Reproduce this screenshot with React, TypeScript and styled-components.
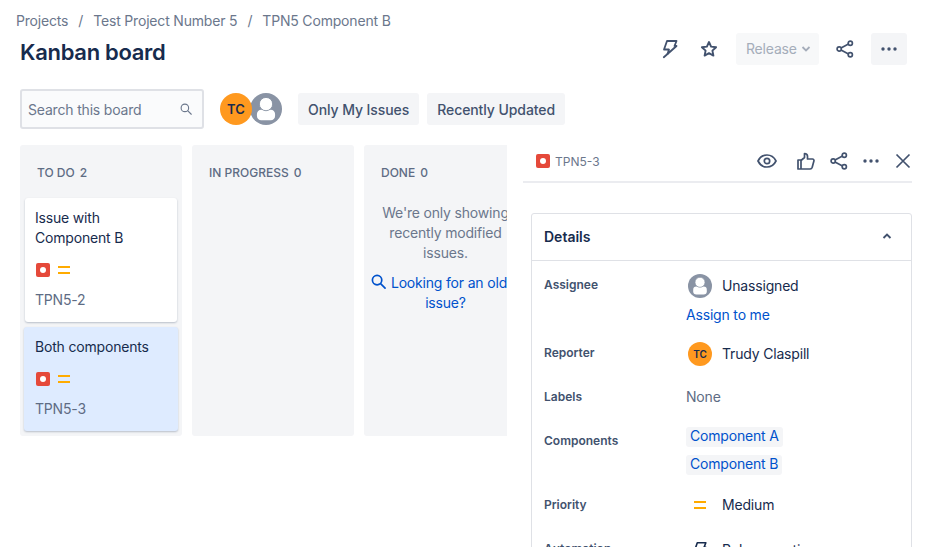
import styled, { createGlobalStyle } from "styled-components"
import { ReactNode } from "react"

const GlobalStyle = createGlobalStyle`
  html, body {
    margin: 0;
    padding: 0;
    height: 100%;
    background: #fff;
    overflow: hidden;
  }
  body {
    font-family: Inter, "Liberation Sans", sans-serif;
    letter-spacing: -0.18px;
    color: #172b4d;
  }
  * {
    box-sizing: border-box;
  }
`

const Page = styled.div`
  width: 931px;
  height: 547px;
  overflow: hidden;
`
const Breadcrumbs = styled.nav`
  display: flex;
  height: 20px;
  padding: 11px 0 0 16px;
  font-size: 14px;
  line-height: 20px;
  color: #6b778c;
  box-sizing: content-box;
`
const Crumb = styled.span``
const Slash = styled.span`
  margin: 0 10px;
`
const TitleRow = styled.div`
  display: flex;
  justify-content: space-between;
  align-items: flex-start;
  height: 58px;
  padding: 2px 24px 0 20px;
`
const Title = styled.h1`
  margin: 0;
  padding-top: 3px;
  font-size: 22px;
  line-height: 32px;
  font-weight: 600;
  letter-spacing: -0.3px;
  color: #172b4d;
`
const Actions = styled.div`
  display: flex;
  align-items: center;
`
const IconSlot = styled.span<{ $width: number; $gap?: number; $lead?: number }>`
  display: flex;
  align-items: center;
  justify-content: center;
  width: ${props => props.$width}px;
  height: 32px;
  margin-left: ${props => props.$lead ?? 0}px;
  margin-right: ${props => props.$gap ?? 0}px;
  color: #42526e;
`
const ReleaseButton = styled.button`
  display: flex;
  align-items: center;
  gap: 4px;
  width: 83px;
  height: 32px;
  padding: 0 0 0 10px;
  border: 0;
  border-radius: 3px;
  background: #f7f8f9;
  color: #a5adba;
  font-family: inherit;
  font-size: 14px;
  line-height: 18px;
  letter-spacing: -0.18px;
`
const MoreButton = styled.button`
  display: flex;
  align-items: center;
  justify-content: center;
  width: 36px;
  height: 32px;
  border: 0;
  border-radius: 3px;
  background: #f4f5f7;
  color: #42526e;
  padding: 0;
`
const Toolbar = styled.div`
  display: flex;
  align-items: center;
  height: 40px;
  margin-left: 20px;
`
const Search = styled.div`
  display: flex;
  align-items: center;
  justify-content: space-between;
  width: 184px;
  height: 40px;
  padding: 0 10px 0 6px;
  border: 2px solid #dfe1e6;
  border-radius: 3px;
  background: #fafbfc;
  color: #6b778c;
  font-size: 14px;
`
const Avatars = styled.div`
  display: flex;
  margin: 0 16px 0 16px;
`
const Avatar = styled.span<{ $size: number }>`
  position: relative;
  z-index: 1;
  display: flex;
  align-items: center;
  justify-content: center;
  flex: none;
  width: ${props => props.$size}px;
  height: ${props => props.$size}px;
  border-radius: 50%;
  background: #ff991f;
  color: #172b4d;
  font-size: ${props => (props.$size > 28 ? 13 : 10)}px;
  font-weight: 600;
  letter-spacing: 0;
`
const OverlapAvatar = styled.span`
  display: flex;
  margin-left: -2px;
`
const FilterButton = styled.button`
  height: 32px;
  margin-right: 8px;
  padding: 0 10px;
  border: 0;
  border-radius: 3px;
  background: #f4f5f7;
  color: #42526e;
  font-family: inherit;
  font-size: 14px;
  font-weight: 500;
  letter-spacing: -0.08px;
`
const Body = styled.div`
  display: flex;
  margin: 16px 0 0 20px;
`
const Board = styled.div`
  display: flex;
  flex: none;
  align-items: flex-start;
  gap: 10px;
  width: 487px;
  overflow: hidden;
`
const Column = styled.section`
  flex: none;
  width: 162px;
  height: 291px;
  padding: 0 4px;
  border-radius: 3px;
  background: #f4f5f7;
`
const ColumnHeader = styled.h2`
  display: flex;
  gap: 5px;
  height: 53px;
  margin: 0;
  padding: 20px 0 0 13px;
  font-size: 12px;
  line-height: 16px;
  font-weight: 500;
  letter-spacing: 0;
  color: #5e6c84;
`
const Card = styled.article<{ $selected?: boolean; $height: number }>`
  width: ${props => (props.$selected ? 154 : 152)}px;
  height: ${props => props.$height}px;
  margin: 0 ${props => (props.$selected ? 0 : 1)}px 5px;
  padding: 10px ${props => (props.$selected ? 11 : 10)}px;
  border-radius: 3px;
  background: ${props => (props.$selected ? "#deebff" : "#fff")};
  box-shadow: 0 1px 2px rgba(9, 30, 66, 0.25);
  font-size: 14px;
  line-height: 20px;
  color: #172b4d;
`
const CardIcons = styled.div`
  display: flex;
  align-items: center;
  gap: 8px;
  height: 14px;
  margin: 15px 0 0 1px;
`
const CardKey = styled.div`
  margin-top: 13px;
  color: #5e6c84;
`
const BugIcon = styled.span`
  display: flex;
  align-items: center;
  justify-content: center;
  flex: none;
  width: 14px;
  height: 14px;
  border-radius: 2px;
  background: #e5493a;

  &::after {
    content: "";
    width: 6px;
    height: 6px;
    border-radius: 50%;
    background: #fff;
  }
`
const EmptyNote = styled.div`
  margin-top: 5px;
  width: 155px;
  text-align: center;
  font-size: 14px;
  line-height: 20px;
  color: #6b778c;
`
const OldIssue = styled.div`
  margin-top: 10px;
  width: 155px;
  text-align: center;
  font-size: 14px;
  line-height: 20px;
  color: #0052cc;

  svg {
    vertical-align: -1px;
    margin-right: 5px;
  }
`
const Panel = styled.aside`
  flex: none;
  width: 389px;
  margin: -4px 0 0 16px;
`
const PanelHeader = styled.header`
  display: flex;
  align-items: center;
  justify-content: space-between;
  height: 40px;
  padding: 0 0 0 13px;
  border-bottom: 2px solid #ebecf0;
  box-sizing: content-box;
`
const IssueKey = styled.div`
  display: flex;
  align-items: center;
  gap: 5px;
  font-size: 12px;
  letter-spacing: 0;
  color: #6b778c;
`
const PanelIcons = styled.div`
  display: flex;
  align-items: center;
  color: #42526e;
`
const Details = styled.div`
  width: 381px;
  height: 400px;
  margin: 30px 0 0 8px;
  border: 1px solid #dfe1e6;
  border-radius: 3px;
`
const DetailsHeader = styled.div`
  display: flex;
  align-items: center;
  justify-content: space-between;
  height: 47px;
  padding: 0 19px 2px 12px;
  border-bottom: 1px solid #dfe1e6;
  font-size: 14px;
  font-weight: 600;
  letter-spacing: 0;
  color: #172b4d;
`
const Rows = styled.div`
  padding: 16px 0 0 12px;
`
const Row = styled.div<{ $height: number }>`
  display: grid;
  grid-template-columns: 142px 1fr;
  align-items: start;
  height: ${props => props.$height}px;
  font-size: 14px;
  line-height: 20px;
  color: #172b4d;
`
const RowLabel = styled.div`
  font-size: 12px;
  font-weight: 600;
  line-height: 16px;
  letter-spacing: 0;
  color: #42526e;
`
const ValueLine = styled.div`
  display: flex;
  align-items: center;
  gap: 10px;
  height: 24px;
  margin-top: -3px;
  padding-left: 2px;
`
const PriorityLine = styled(ValueLine)`
  height: 22px;
`
const AssignLink = styled.div`
  margin-top: 7px;
  color: #0052cc;
`
const NoneText = styled.div`
  margin-top: -2px;
  color: #5e6c84;
`
const TagList = styled.div`
  display: flex;
  flex-direction: column;
  align-items: flex-start;
  gap: 8px;
  margin-top: -6px;
`
const ComponentTag = styled.div`
  height: 20px;
  padding: 0 4px;
  border-radius: 3px;
  background: #f4f5f7;
  color: #0052cc;
  font-size: 14px;
  line-height: 18px;
`
const PriorityIcon = styled.span`
  display: flex;
  flex: none;
  justify-content: center;
  width: 24px;
`

const UserIcon = ({ size }: { size: number }) => (
  <svg width={size} height={size} viewBox="0 0 24 24">
    <circle cx="12" cy="12" r="12" fill="#8993a4" />
    <rect x="5.200" y="12.500" width="13.600" height="8" rx="3.200" fill="#fff" />
    <circle cx="12" cy="8.300" r="5" fill="#fff" stroke="#8993a4" strokeWidth="0.700" />
  </svg>
)

const Bolt = ({ size = 20 }: { size?: number }) => (
  <svg width={size} height={size} viewBox="0 0 20 20" fill="none" stroke="currentColor" strokeWidth="1.800" strokeLinejoin="round" strokeLinecap="round">
    <path d="M7 2h9.500L14.500 7h2L7.500 15 9 10.500H4z" />
    <path d="M3.800 18.200L7.500 15" />
  </svg>
)

const Star = () => (
  <svg width="18" height="18" viewBox="0 0 18 18" fill="none" stroke="currentColor" strokeWidth="1.900" strokeLinejoin="round">
    <path d="M9 2l2.100 4.600 5 .6-3.700 3.400 1 5L9 13.100l-4.400 2.500 1-5L1.900 7.200l5-.6z" />
  </svg>
)

const Share = () => (
  <svg width="20" height="20" viewBox="0 0 20 20" fill="none" stroke="currentColor" strokeWidth="1.700">
    <circle cx="15.300" cy="4.200" r="2.100" />
    <circle cx="15.300" cy="15.800" r="2.100" />
    <circle cx="4.200" cy="10" r="2.100" />
    <path d="M6 9l7.500-3.900M6 11l7.500 3.900" />
  </svg>
)

const Dots = () => (
  <svg width="18" height="6" viewBox="0 0 18 6" fill="currentColor">
    <circle cx="3" cy="3" r="1.700" />
    <circle cx="9" cy="3" r="1.700" />
    <circle cx="15" cy="3" r="1.700" />
  </svg>
)

const Medium = () => (
  <svg width="12" height="8" viewBox="0 0 12 8" fill="#ffab00">
    <rect x="0" y="0" width="12" height="2" />
    <rect x="0" y="6" width="12" height="2" />
  </svg>
)

const Glass = ({ size, color, width }: { size: number; color: string; width: number }) => (
  <svg width={size} height={size} viewBox="0 0 16 16" fill="none" stroke={color} strokeWidth={width} strokeLinecap="round">
    <circle cx="6.500" cy="6.500" r="5" />
    <path d="M10.500 10.500L15 15" />
  </svg>
)

const IssueCard = ({ title, issue, selected, height }: { title: ReactNode; issue: string; selected?: boolean; height: number }) => (
  <Card $selected={selected} $height={height}>
    {title}
    <CardIcons>
      <BugIcon />
      <Medium />
    </CardIcons>
    <CardKey>{issue}</CardKey>
  </Card>
)

function App() {
  return (
    <Page>
      <GlobalStyle />
      <Breadcrumbs>
        <Crumb>Projects</Crumb>
        <Slash>/</Slash>
        <Crumb>Test Project Number 5</Crumb>
        <Slash>/</Slash>
        <Crumb>TPN5 Component B</Crumb>
      </Breadcrumbs>
      <TitleRow>
        <Title>Kanban board</Title>
        <Actions>
          <IconSlot $width={22} $gap={17}><Bolt /></IconSlot>
          <IconSlot $width={22} $gap={16}><Star /></IconSlot>
          <ReleaseButton>
            Release
            <svg width="10" height="6" viewBox="0 0 10 6" fill="none" stroke="#a5adba" strokeWidth="1.800"><path d="M1.500 1l3.500 3.500L8.500 1" /></svg>
          </ReleaseButton>
          <IconSlot $width={20} $lead={16} $gap={16}><Share /></IconSlot>
          <MoreButton><Dots /></MoreButton>
        </Actions>
      </TitleRow>
      <Toolbar>
        <Search>
          Search this board
          <Glass size={12} color="#6b778c" width={1.500} />
        </Search>
        <Avatars>
          <Avatar $size={32}>TC</Avatar>
          <OverlapAvatar><UserIcon size={32} /></OverlapAvatar>
        </Avatars>
        <FilterButton>Only My Issues</FilterButton>
        <FilterButton>Recently Updated</FilterButton>
      </Toolbar>
      <Body>
        <Board>
          <Column>
            <ColumnHeader><span>TO DO</span><span>2</span></ColumnHeader>
            <IssueCard title={<>Issue with<br />Component B</>} issue="TPN5-2" height={124} />
            <IssueCard title="Both components" issue="TPN5-3" height={104} selected />
          </Column>
          <Column>
            <ColumnHeader><span>IN PROGRESS</span><span>0</span></ColumnHeader>
          </Column>
          <Column>
            <ColumnHeader><span>DONE</span><span>0</span></ColumnHeader>
            <EmptyNote>We're only showing recently modified issues.</EmptyNote>
            <OldIssue><Glass size={15} color="#0052cc" width={1.800} />Looking for an older issue?</OldIssue>
          </Column>
        </Board>
        <Panel>
          <PanelHeader>
            <IssueKey><BugIcon />TPN5-3</IssueKey>
            <PanelIcons>
              <IconSlot $width={20} $gap={20}>
                <svg width="20" height="14" viewBox="0 0 20 14" fill="none" stroke="currentColor" strokeWidth="1.700">
                  <path d="M1 7C3 3 6.200 1 10 1S17 3 19 7C17 11 13.800 13 10 13S3 11 1 7z" />
                  <circle cx="10" cy="7" r="2.700" />
                </svg>
              </IconSlot>
              <IconSlot $width={18} $gap={14}>
                <svg width="18" height="18" viewBox="0 0 18 18" fill="none" stroke="currentColor" strokeWidth="1.700" strokeLinejoin="round">
                  <path d="M1 8h3v9H1zM4 8.500l3.500-3V1.500c2 0 3 1.200 3 2.800V7h5c1 0 1.700 1 1.400 2l-1.700 6.300c-.3 1-1 1.700-2 1.700H4" />
                </svg>
              </IconSlot>
              <IconSlot $width={20} $gap={13}><Share /></IconSlot>
              <IconSlot $width={18} $gap={15}><Dots /></IconSlot>
              <IconSlot $width={16} $gap={1}>
                <svg width="16" height="16" viewBox="0 0 16 16" fill="none" stroke="currentColor" strokeWidth="1.700"><path d="M1.500 1.500l13 13M14.500 1.500l-13 13" /></svg>
              </IconSlot>
            </PanelIcons>
          </PanelHeader>
          <Details>
            <DetailsHeader>
              Details
              <svg width="10" height="6" viewBox="0 0 10 6" fill="none" stroke="#42526e" strokeWidth="1.900"><path d="M1.500 5L5 1.500 8.500 5" /></svg>
            </DetailsHeader>
            <Rows>
              <Row $height={68}>
                <RowLabel>Assignee</RowLabel>
                <div>
                  <ValueLine><UserIcon size={24} />Unassigned</ValueLine>
                  <AssignLink>Assign to me</AssignLink>
                </div>
              </Row>
              <Row $height={44}>
                <RowLabel>Reporter</RowLabel>
                <ValueLine><Avatar $size={24}>TC</Avatar>Trudy Claspill</ValueLine>
              </Row>
              <Row $height={44}>
                <RowLabel>Labels</RowLabel>
                <NoneText>None</NoneText>
              </Row>
              <Row $height={64}>
                <RowLabel>Components</RowLabel>
                <TagList>
                  <ComponentTag>Component A</ComponentTag>
                  <ComponentTag>Component B</ComponentTag>
                </TagList>
              </Row>
              <Row $height={44}>
                <RowLabel>Priority</RowLabel>
                <PriorityLine><PriorityIcon><Medium /></PriorityIcon>Medium</PriorityLine>
              </Row>
              <Row $height={40}>
                <RowLabel>Automation</RowLabel>
                <ValueLine><PriorityIcon><Bolt size={18} /></PriorityIcon>Rule executions</ValueLine>
              </Row>
            </Rows>
          </Details>
        </Panel>
      </Body>
    </Page>
  )
}

export default App
